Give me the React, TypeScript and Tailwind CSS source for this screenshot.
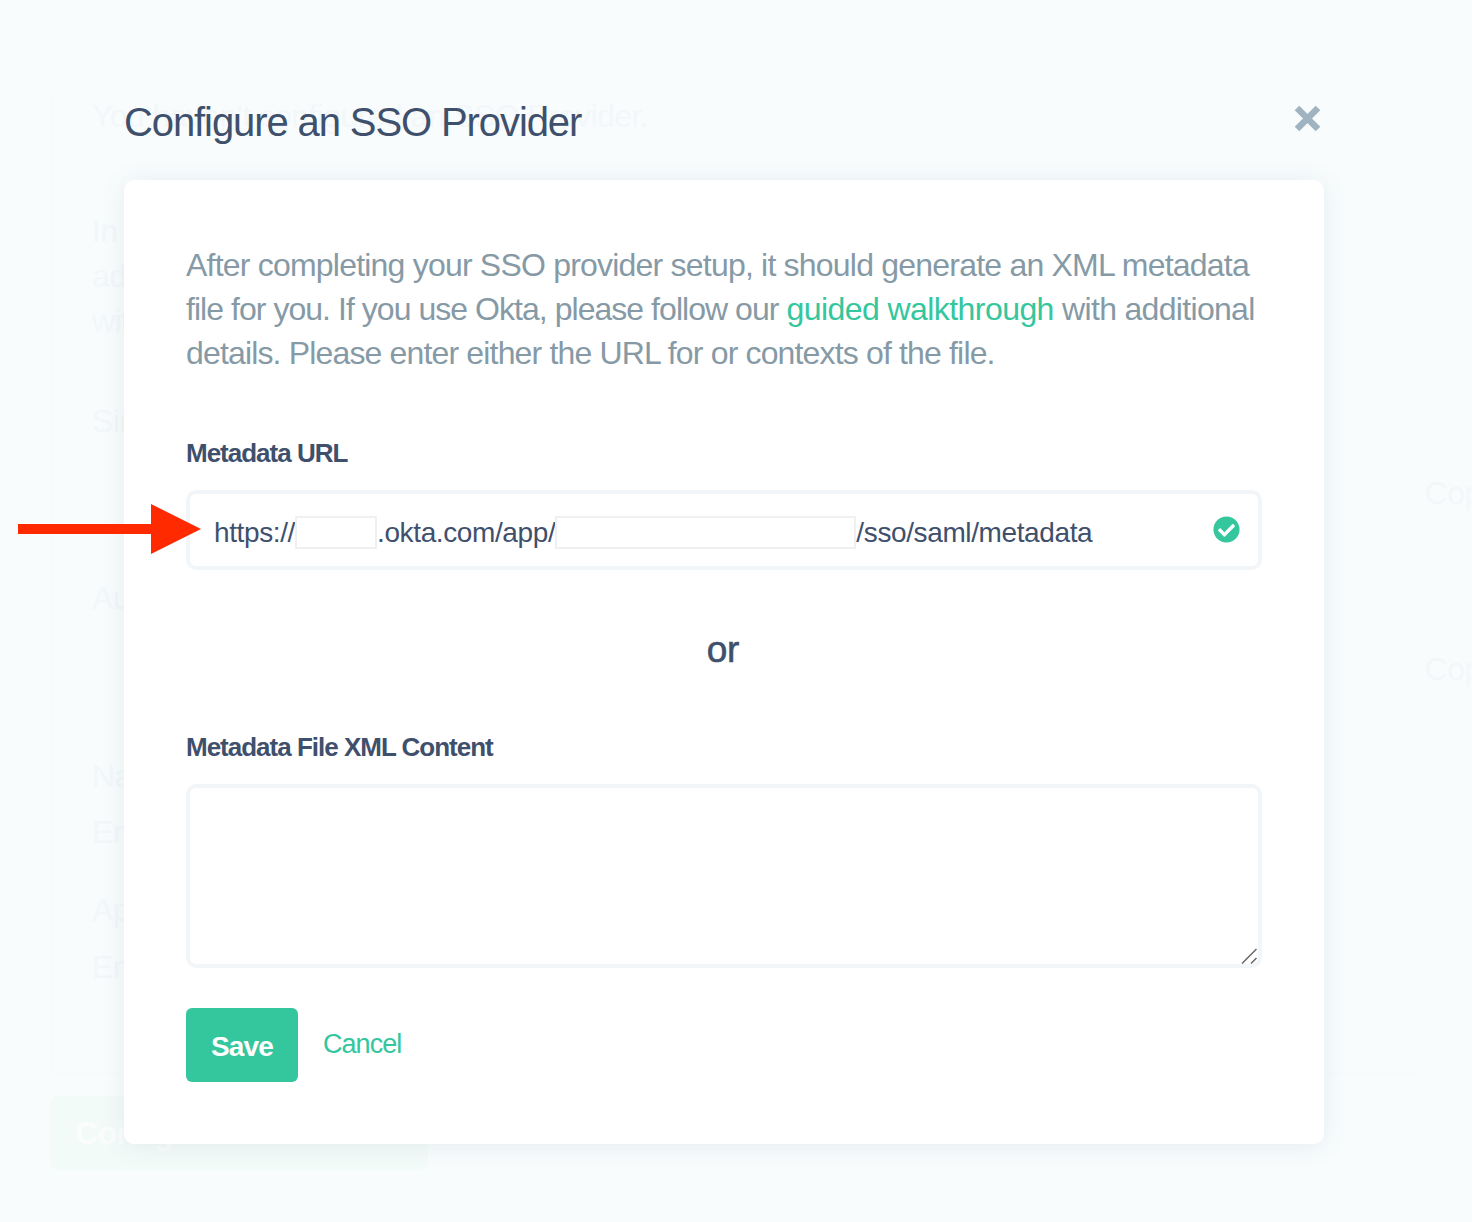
import { FaCheckCircle } from 'react-icons/fa';

const font = 'font-["Liberation_Sans",Arial,sans-serif]';

function Backdrop() {
  return (
    <div className="h-full px-[51px] pt-[94px] text-[32px] leading-[44px] tracking-[-0.6px] text-[#f3f7f9]">
      <div className="border-b border-l border-[#f6fafb] px-[40px] pb-[83px]">
        <p>You haven't configured an SSO Provider.</p>
        <div className="mt-[71px] whitespace-nowrap leading-[45px]">
          <p>In order to use Single Sign On, you need to configure your SSO Provider and</p>
          <p>add the following values. You will need to add them. If you use Okta, follow</p>
          <p>with us</p>
        </div>
        <p className="mt-[55px]">Single Sign On URL</p>
        <div className="-mr-[116px] flex justify-end pt-[28px]">Copy</div>
        <p className="mt-[61px]">Audience URI</p>
        <div className="-mr-[116px] flex justify-end pt-[27px]">Copy</div>
        <p className="mt-[63px]">Name ID</p>
        <p className="mt-[12px]">Email</p>
        <p className="mt-[34px]">Application</p>
        <p className="mt-[13px]">Email</p>
      </div>
      <div className="mt-[23px] flex h-[74px] w-[377px] items-center rounded-md bg-[#f3fbf9] px-[24px] font-bold text-[#fbfdfd]">
        Configure
      </div>
    </div>
  );
}

function Redacted({ width }: { width: string }) {
  return <span className={`mb-[2px] inline-block h-[33px] border-2 border-[#eef0f2] bg-white align-middle ${width}`} />;
}

function ArrowMark() {
  return (
    <svg className="absolute left-[18px] top-[504px]" width="184" height="50" viewBox="0 0 184 50">
      <rect x="0" y="20" width="134" height="10" fill="#ff2a00" />
      <path d="M133 0 L183 25 L133 50 Z" fill="#ff2a00" />
    </svg>
  );
}

export default function App() {
  return (
    <div className={`relative h-[1222px] w-[1472px] overflow-hidden bg-[#f8fcfd] ${font}`}>
      <Backdrop />

      <div className="absolute inset-0 px-[124px] pt-[98px]">
        <div className="w-[1200px]">
          <div className="flex h-[82px] items-start justify-between">
            <h1 className="text-[40px] leading-[48px] tracking-[-1.1px] text-[#3f506c]">Configure an SSO Provider</h1>
            <svg className="mr-[3px] mt-[7px]" width="27" height="27" viewBox="0 0 27 27">
              <path d="M3 3 L24 24 M24 3 L3 24" stroke="#9fb3c1" strokeWidth="6.5" strokeLinecap="butt" />
            </svg>
          </div>

          <div className="h-[964px] rounded-[10px] bg-white px-[62px] pt-[63px] shadow-[0_2px_24px_rgba(70,100,120,0.1)]">
            <p className="whitespace-nowrap text-[32px] leading-[44px] tracking-[-0.79px] text-[#869aa6]">
              After completing your SSO provider setup, it should generate an XML metadata
              <br />
              <span className="tracking-[-0.96px]">file for you. If you use Okta, please follow our </span>
              <a className="tracking-[-0.56px] text-[#34c69d]">guided walkthrough</a>
              <span className="tracking-[-0.68px]"> with additional</span>
              <br />
              <span className="tracking-[-0.84px]">details. Please enter either the URL for or contexts of the file.</span>
            </p>

            <label className="mt-[60px] block text-[26px] font-bold leading-[36px] tracking-[-1px] text-[#3f506c]">
              Metadata URL
            </label>
            <div className="mt-[19px] flex h-[80px] w-[1076px] items-center justify-between rounded-[10px] border-4 border-[#f3f6f9] pl-[24px] pr-[18px]">
              <span className="mt-[6px] flex items-center whitespace-nowrap text-[28px] tracking-[-0.38px] text-[#3f506c]">
                https://
                <Redacted width="w-[82px]" />
                .okta.com/app/
                <Redacted width="w-[301px]" />
                /sso/saml/metadata
              </span>
              <FaCheckCircle className="mb-[2px] text-[#34c69d]" size={27} />
            </div>

            <p className="mt-[59px] w-[1076px] pr-[2px] text-center text-[37px] leading-[42px] tracking-[-0.3px] text-[#3f506c] [-webkit-text-stroke:0.6px_#3f506c]">
              or
            </p>

            <label className="mt-[58px] block text-[26px] font-bold leading-[36px] tracking-[-1px] text-[#3f506c]">
              Metadata File XML Content
            </label>
            <div className="relative mt-[19px] w-[1076px]">
              <textarea className="block h-[184px] w-full resize-none rounded-[10px] border-4 border-[#f3f6f9] bg-white outline-none" />
              <svg className="absolute bottom-[3px] right-[4px]" width="18" height="18" viewBox="0 0 18 18">
                <path d="M2 16.5 L16.5 2 M11 16.5 L16.5 11" stroke="#666666" strokeWidth="1.5" fill="none" />
              </svg>
            </div>

            <div className="mt-[40px] flex items-start gap-[25px]">
              <button className="h-[74px] w-[112px] rounded-[6px] bg-[#34c69d] pt-[3px] text-[28px] font-bold tracking-[-0.9px] text-white">
                Save
              </button>
              <a className="mt-[18px] text-[27px] leading-[36px] tracking-[-0.95px] text-[#34c69d]">Cancel</a>
            </div>
          </div>
        </div>
      </div>

      <ArrowMark />
    </div>
  );
}
